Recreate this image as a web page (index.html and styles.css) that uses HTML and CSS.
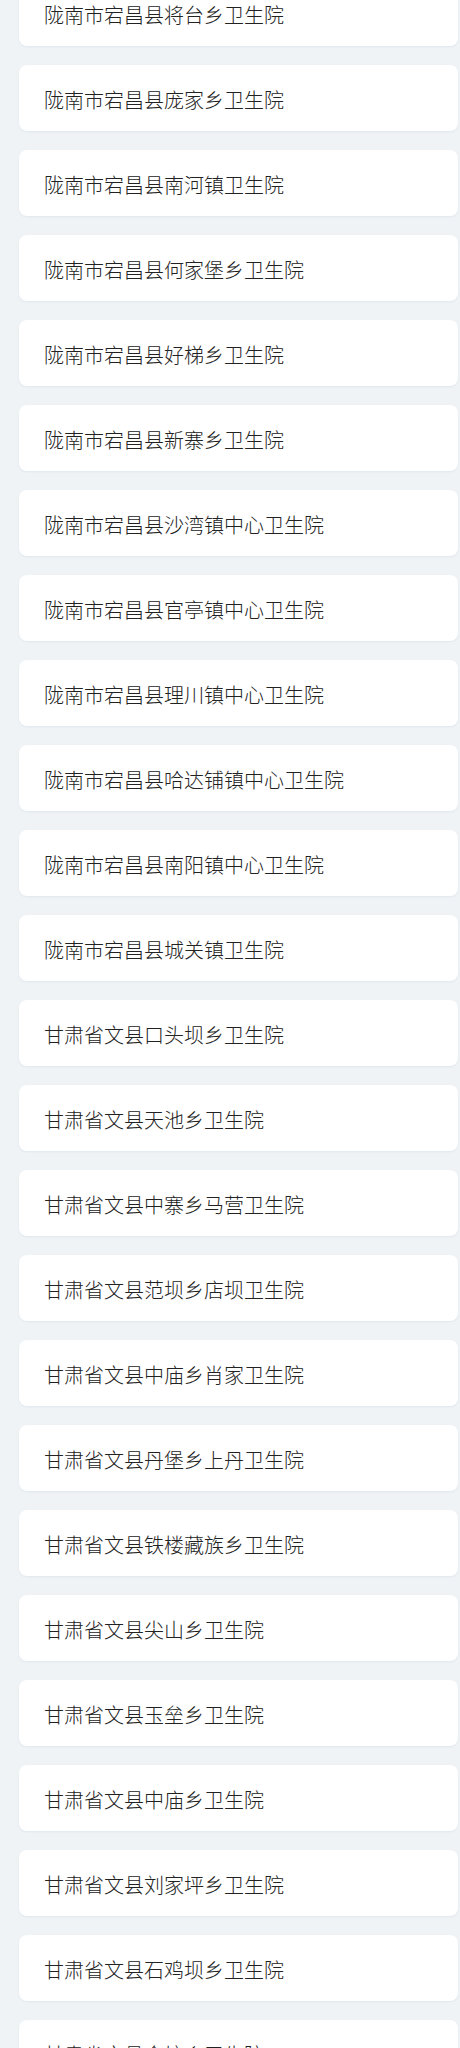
FILE: index.html
```html
<!DOCTYPE html>
<html lang="zh-CN">
<head>
<meta charset="utf-8">
<title>卫生院列表</title>
<link rel="stylesheet" href="styles.css">
</head>
<body>
<ul class="list">
<li class="card">陇南市宕昌县将台乡卫生院</li>
<li class="card">陇南市宕昌县庞家乡卫生院</li>
<li class="card">陇南市宕昌县南河镇卫生院</li>
<li class="card">陇南市宕昌县何家堡乡卫生院</li>
<li class="card">陇南市宕昌县好梯乡卫生院</li>
<li class="card">陇南市宕昌县新寨乡卫生院</li>
<li class="card">陇南市宕昌县沙湾镇中心卫生院</li>
<li class="card">陇南市宕昌县官亭镇中心卫生院</li>
<li class="card">陇南市宕昌县理川镇中心卫生院</li>
<li class="card">陇南市宕昌县哈达铺镇中心卫生院</li>
<li class="card">陇南市宕昌县南阳镇中心卫生院</li>
<li class="card">陇南市宕昌县城关镇卫生院</li>
<li class="card">甘肃省文县口头坝乡卫生院</li>
<li class="card">甘肃省文县天池乡卫生院</li>
<li class="card">甘肃省文县中寨乡马营卫生院</li>
<li class="card">甘肃省文县范坝乡店坝卫生院</li>
<li class="card">甘肃省文县中庙乡肖家卫生院</li>
<li class="card">甘肃省文县丹堡乡上丹卫生院</li>
<li class="card">甘肃省文县铁楼藏族乡卫生院</li>
<li class="card">甘肃省文县尖山乡卫生院</li>
<li class="card">甘肃省文县玉垒乡卫生院</li>
<li class="card">甘肃省文县中庙乡卫生院</li>
<li class="card">甘肃省文县刘家坪乡卫生院</li>
<li class="card">甘肃省文县石鸡坝乡卫生院</li>
<li class="card">甘肃省文县金坑乡卫生院</li>
</ul>
</body>
</html>
```
FILE: styles.css
```css
html, body {
  margin: 0;
  padding: 0;
  background: #eff3f6;
}
body {
  font-family: "Noto Sans CJK SC", "Noto Sans", sans-serif;
  color: #222222;
  overflow: hidden;
}
.list {
  list-style: none;
  margin: -20px 2px 0 19px;
  padding: 0;
  display: flex;
  flex-direction: column;
  gap: 19px;
}
.card {
  background: #ffffff;
  border-radius: 8px;
  height: 66px;
  box-sizing: border-box;
  padding: 3px 25px 0;
  display: flex;
  align-items: center;
  font-size: 20px;
  font-weight: 300;
  line-height: 1;
  box-shadow: 0 1px 2px rgba(150, 170, 190, 0.15);
}
```
